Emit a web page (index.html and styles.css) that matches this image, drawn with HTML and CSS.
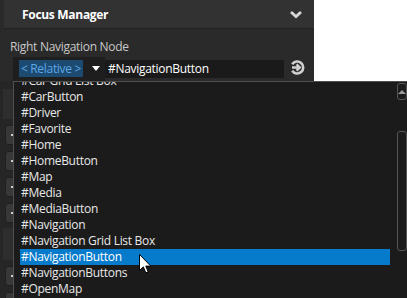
FILE: index.html
```html
<!DOCTYPE html>
<html lang="en">
  <head>
    <meta charset="UTF-8" />
    <meta name="viewport" content="width=device-width, initial-scale=1.0" />
    <title>Focus Manager</title>
    <link rel="stylesheet" href="styles.css">
  </head>
  <body>
    <div class="panel">
      <div class="panel-header">
        <span class="panel-title">Focus Manager</span>
        <svg class="chevron" width="14" height="9" viewBox="0 0 14 9">
          <path d="M2 2 L7 6.5 L12 2" fill="none" stroke="#d6d6d6" stroke-width="2.8" />
        </svg>
      </div>
      <div class="prop-label">Right Navigation Node</div>
      <div class="prop-row">
        <div class="combo">
          <span class="chip">&lt; Relative &gt;</span>
          <span class="caret"></span>
        </div>
        <div class="field">#NavigationButton</div>
        <svg class="go-icon" width="16" height="17" viewBox="0 0 16 17">
          <path d="M3.2 5.2 A6 6 0 1 1 3.2 11.8" fill="none" stroke="#d0d0d0" stroke-width="2.6" />
          <path d="M3 8.5 H10.5 M7.6 5.3 L10.8 8.5 L7.6 11.7" fill="none" stroke="#d0d0d0" stroke-width="2.4" />
        </svg>
      </div>
      <div class="panel-lower">
        <div class="block"></div>
        <div class="stub"></div>
        <div class="stub"></div>
        <div class="stub"></div>
        <div class="stub"></div>
        <div class="block tall"></div>
        <div class="stub"></div>
        <div class="stub"></div>
      </div>
    </div>

    <div class="dropdown">
      <ul class="options">
        <li>#Car Grid List Box</li>
        <li>#CarButton</li>
        <li>#Driver</li>
        <li>#Favorite</li>
        <li>#Home</li>
        <li>#HomeButton</li>
        <li>#Map</li>
        <li>#Media</li>
        <li>#MediaButton</li>
        <li>#Navigation</li>
        <li>#Navigation Grid List Box</li>
        <li class="selected">#NavigationButton</li>
        <li>#NavigationButtons</li>
        <li>#OpenMap</li>
      </ul>
      <div class="scrollbar">
        <div class="scroll-up"><span class="up-arrow"></span></div>
        <div class="scroll-thumb"></div>
      </div>
    </div>

    <svg class="cursor" width="13" height="21" viewBox="0 0 13 21">
      <path d="M0.5 0.5 V16.5 L4.3 12.9 L6.8 18.8 L9.2 17.8 L6.8 12.1 L11.8 12.1 Z" fill="#ffffff" stroke="#000000" stroke-width="1" />
    </svg>
  </body>
</html>
```

FILE: styles.css
```css
body {
  margin: 0;
  width: 407px;
  height: 298px;
  overflow: hidden;
  background: #ffffff;
  font-family: "Open Sans", "Noto Sans", sans-serif;
  font-size: 12px;
  letter-spacing: -0.3px;
  position: relative;
}
.panel {
  width: 314px;
  height: 298px;
  background: #2a2a2a;
}
.panel-header {
  margin-left: 4px;
  height: 28px;
  background: #323232;
  border-bottom: 1px solid #222222;
  display: flex;
  align-items: center;
  justify-content: space-between;
  padding: 0 11px 0 18px;
}
.panel-title {
  color: #ffffff;
  font-weight: bold;
  font-size: 12px;
}
.chevron {
  display: block;
}
.prop-label {
  color: #c8c8c8;
  padding: 9px 0 0 10px;
  height: 19px;
  line-height: 17px;
}
.prop-row {
  display: flex;
  align-items: flex-start;
  margin-left: 13px;
  height: 24px;
}
.combo {
  width: 92px;
  height: 24px;
  background: #1e1e1e;
  display: flex;
  align-items: flex-start;
  padding: 3px 0 0 6px;
  box-sizing: border-box;
}
.chip {
  width: 64px;
  height: 17px;
  line-height: 17px;
  background: #1d4a70;
  color: #5ca8e8;
  text-align: center;
}
.caret {
  margin: 6px 0 0 9px;
  width: 0;
  height: 0;
  border-left: 4px solid transparent;
  border-right: 4px solid transparent;
  border-top: 5px solid #ffffff;
}
.field {
  margin-top: 3px;
  width: 179px;
  height: 18px;
  line-height: 18px;
  background: #1a1a1a;
  color: #ffffff;
  padding-left: 3px;
  box-sizing: border-box;
}
.go-icon {
  margin: 2px 0 0 5px;
  display: block;
}
.panel-lower {
  padding-top: 8px;
  background: #262626;
  height: 217px;
  box-sizing: border-box;
}
.block {
  margin-left: 3px;
  height: 30px;
  background: #2e2e2e;
}
.block.tall {
  height: 32px;
  margin-top: 5px;
}
.stub {
  margin: 6px 0 0 5px;
  width: 200px;
  height: 20px;
  box-sizing: border-box;
  background: #383838;
  border: 1px solid #1f1f1f;
  border-radius: 3px;
  position: relative;
}
.stub::before {
  content: "";
  position: absolute;
  left: 5px;
  top: 8px;
  width: 2px;
  height: 2px;
  background: #cfcfcf;
}
.dropdown {
  position: absolute;
  left: 13px;
  top: 81px;
  right: 0;
  bottom: 0;
  background: #1b1b1b;
  border-top: 1px solid #505050;
  border-left: 1px solid #505050;
  display: flex;
  overflow: hidden;
}
.options {
  list-style: none;
  margin: -9px 0 0 0;
  padding: 0 0 0 6px;
  width: 375px;
}
.options li {
  height: 16px;
  line-height: 16px;
  color: #e8e8e8;
  padding-left: 1px;
  white-space: nowrap;
}
.options li.selected {
  background: #067acb;
  color: #ffffff;
}
.scrollbar {
  margin-left: 7px;
  width: 10px;
  padding-top: 1px;
}
.scroll-up {
  height: 17px;
  border: 1px solid #555555;
  border-radius: 3px;
  box-sizing: border-box;
  display: flex;
  justify-content: center;
  padding-top: 6px;
}
.up-arrow {
  width: 0;
  height: 0;
  border-left: 4px solid transparent;
  border-right: 4px solid transparent;
  border-bottom: 4px solid #9a9a9a;
}
.scroll-thumb {
  margin-top: 31px;
  height: 120px;
  border: 1px solid #555555;
  border-radius: 3px;
  box-sizing: border-box;
}
.cursor {
  position: absolute;
  left: 139px;
  top: 254px;
}
```
